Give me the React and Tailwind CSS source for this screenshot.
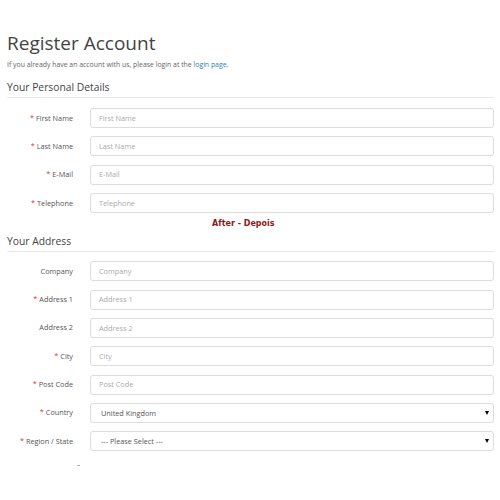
import React from "react";

const font = { fontFamily: '"Open Sans", "Liberation Sans", sans-serif' };

function Row({ label, required, placeholder, select, value }) {
  return (
    <div className="flex items-center h-[28.33px]">
      <div className="w-[66px] shrink-0 text-right text-[7.3px] text-[#555] leading-none">
        {required && <span className="text-[#e4312f] mr-[2px]">*</span>}
        {label}
      </div>
      <div className="ml-[17px] flex-1 h-[20px] border border-[#dcdcdc] rounded-[3px] bg-white flex items-center relative">
        {select ? (
          <>
            <span className="pl-[10px] text-[7.3px] text-[#555]">{value}</span>
            <span className="absolute right-[4px] top-[7px] w-0 h-0 border-l-[2.5px] border-r-[2.5px] border-t-[4px] border-l-transparent border-r-transparent border-t-black"></span>
          </>
        ) : (
          <span className="pl-[8px] text-[7.3px] text-[#aaa]">{placeholder}</span>
        )}
      </div>
    </div>
  );
}

export default function App() {
  return (
    <div className="w-[500px] h-[500px] bg-white overflow-hidden pl-[7px] pr-[6px]" style={font}>
      <h1 className="pt-[30px] text-[19px] leading-[26px] text-[#444] font-normal">Register Account</h1>
      <p className="mt-[4px] text-[6.9px] leading-[10px] text-[#666]">
        If you already have an account with us, please login at the{" "}
        <span className="text-[#2a7fb8]">login page</span>.
      </p>
      <div className="mt-[10px] text-[10.3px] leading-[14px] text-[#444] pb-[3px] border-b border-[#e8e8e8]">Your Personal Details</div>
      <div className="mt-[6px]">
        <Row label="First Name" required placeholder="First Name" />
        <Row label="Last Name" required placeholder="Last Name" />
        <Row label="E-Mail" required placeholder="E-Mail" />
        <Row label="Telephone" required placeholder="Telephone" />
      </div>
      <div className="mt-[1px] pl-[205px] text-[8px] leading-[12px] font-bold text-[#8b1a1a]" style={{ fontFamily: '"DejaVu Sans", Verdana, sans-serif' }}>
        After - Depois
      </div>
      <div className="mt-[4px] text-[10.3px] leading-[14px] text-[#444] pb-[3px] border-b border-[#e8e8e8]">Your Address</div>
      <div className="mt-[5px]">
        <Row label="Company" placeholder="Company" />
        <Row label="Address 1" required placeholder="Address 1" />
        <Row label="Address 2" placeholder="Address 2" />
        <Row label="City" required placeholder="City" />
        <Row label="Post Code" required placeholder="Post Code" />
        <Row label="Country" required select value="United Kingdom" />
        <Row label="Region / State" required select value="--- Please Select ---" />
      </div>
      <div className="mt-[9px] ml-[70px] w-[3px] h-px bg-[#aaa]"></div>
    </div>
  );
}
